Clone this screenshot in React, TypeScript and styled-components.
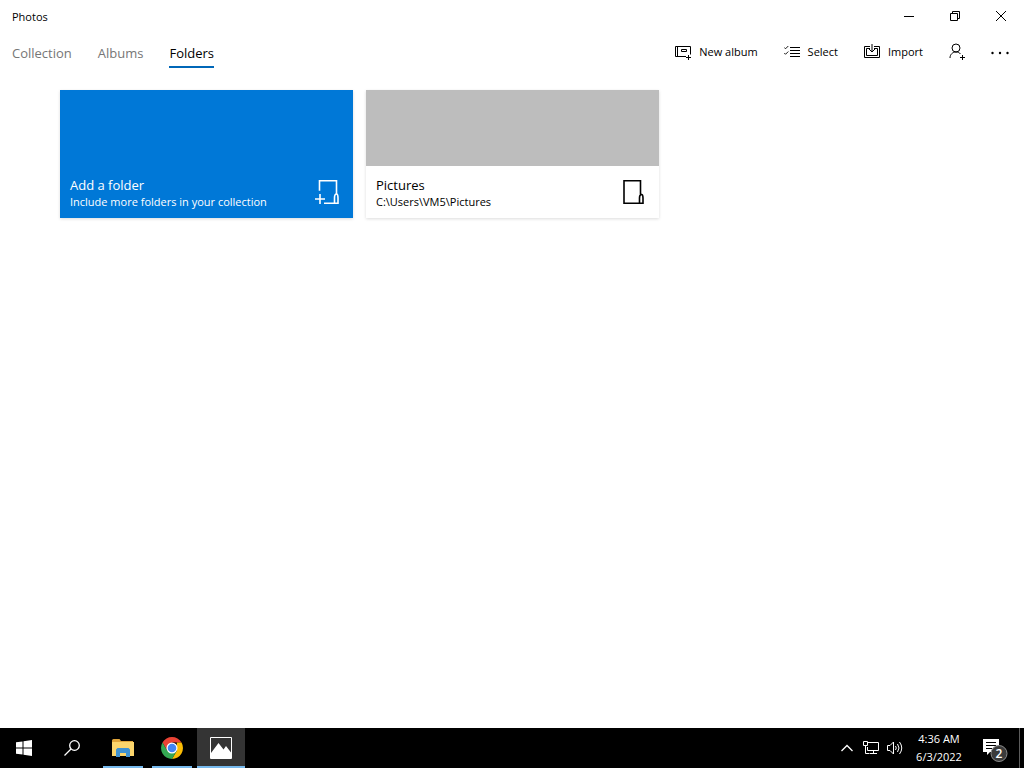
import React from "react";
import styled, { createGlobalStyle } from "styled-components";

const Global = createGlobalStyle`
  *, *::before, *::after { box-sizing: border-box; }
  body { margin: 0; background: #fff; color: #000; font: 12px/16px "Open Sans", "Noto Sans", sans-serif; }
  button { font: inherit; color: inherit; background: none; border: 0; margin: 0; padding: 0; text-align: left; }
  svg { display: block; flex: none; }
  h1, h2, p { margin: 0; font: inherit; }
`;

const Window = styled.div`
  min-height: 100vh;
  display: flex;
  flex-direction: column;
`;

const TitleBar = styled.header`
  display: flex;
  align-items: center;
  height: 32px;
  padding-left: 12px;
`;

const AppName = styled.h1`
  flex: 1;
  padding-top: 2px;
  font-size: 11px;
`;

const CaptionButton = styled.button`
  width: 46px;
  height: 32px;
  display: grid;
  place-items: center;
`;

const Toolbar = styled.div`
  display: flex;
  align-items: center;
  justify-content: space-between;
  height: 40px;
  padding: 0 15px 0 12px;
`;

const Tabs = styled.nav`
  display: flex;
  gap: 26px;
`;

const Tab = styled.a<{ $active?: boolean }>`
  height: 32px;
  padding-top: 7px;
  font-size: 13px;
  line-height: 20px;
  color: ${(p) => (p.$active ? "#000" : "#767676")};
  text-decoration: none;
  border-bottom: 2px solid ${(p) => (p.$active ? "#0067b8" : "transparent")};
`;

const Commands = styled.div`
  display: flex;
  align-items: center;
  gap: 26px;
`;

const Command = styled.button`
  display: flex;
  align-items: center;
  gap: 8px;
  height: 40px;
  font-size: 11px;
`;

const Content = styled.main`
  flex: 1;
  padding: 18px 60px;
`;

const FolderGrid = styled.div`
  display: grid;
  grid-template-columns: repeat(auto-fill, 293px);
  gap: 13px;
`;

const Card = styled.button<{ $accent?: boolean }>`
  display: flex;
  flex-direction: column;
  height: 128px;
  background: ${(p) => (p.$accent ? "#0078d7" : "#fff")};
  color: ${(p) => (p.$accent ? "#fff" : "#000")};
  box-shadow: 0 1px 3px rgba(0, 0, 0, 0.14);
`;

const Thumbnail = styled.div<{ $empty?: boolean }>`
  width: 100%;
  flex: 1;
  background: ${(p) => (p.$empty ? "#bdbdbd" : "transparent")};
`;

const CardInfo = styled.div`
  display: flex;
  align-items: center;
  justify-content: space-between;
  width: 100%;
  height: 52px;
  padding: 0 11px 0 10px;
`;

const CardText = styled.div`
  padding-top: 2px;
`;

const CardTitle = styled.h2`
  font-size: 13px;
  line-height: 18px;
`;

const CardNote = styled.p`
  font-size: 11px;
  line-height: 16px;
`;

const Taskbar = styled.footer`
  display: flex;
  height: 40px;
  background: #000;
  color: #fff;
`;

const TaskButton = styled.button<{ $open?: boolean; $active?: boolean }>`
  width: 48px;
  height: 40px;
  display: grid;
  place-items: center;
  background: ${(p) => (p.$active ? "#343434" : "none")};

  &::after {
    content: "";
    grid-area: 1 / 1;
    align-self: end;
    width: ${(p) => (p.$active ? "48px" : "40px")};
    height: 2px;
    background: ${(p) => (p.$open ? "#76b9ed" : "transparent")};
  }

  svg { grid-area: 1 / 1; }
`;

const Pinned = styled.div`
  display: flex;
  gap: 1px;
  padding-left: 3px;
`;

const Tray = styled.div`
  display: flex;
  align-items: center;
  margin-left: auto;
`;

const TrayButton = styled.button`
  width: 24px;
  height: 40px;
  display: grid;
  place-items: center;
`;

const Clock = styled.button`
  width: 64px;
  font-size: 11px;
  line-height: 18px;
  text-align: center;
`;

const Notifications = styled(TrayButton)`
  width: 48px;
`;

const ShowDesktop = styled.button`
  width: 5px;
  height: 40px;
  border-left: 1px solid #5c5c5c;
`;

const line = { fill: "none", stroke: "currentColor", "aria-hidden": true } as const;

const MinimizeIcon = () => <svg {...line} width="10" height="10"><path d="M0 5.5h10" /></svg>;
const RestoreIcon = () => (
  <svg {...line} width="10" height="10"><path d="M.5 2.500h7v7h-7zM2.500 2.500v-2h7v7h-2" /></svg>
);
const CloseIcon = () => <svg {...line} width="10" height="10"><path d="M0 0l10 10M10 0L0 10" /></svg>;
const AlbumIcon = () => (
  <svg {...line} width="16" height="16">
    <path d="M11 12.500H.5v-10h15v8M2.500 2.500v10M6.500 5.500h5v2h-5zM13.500 11v5M11 13.500h5" />
  </svg>
);
const SelectIcon = () => (
  <svg {...line} width="16" height="16">
    <path d="M6 3.500h10M6 6.500h10M6 9.500h10M6 12.500h10" />
    <path strokeWidth=".9" d="M.3 3.500l1.200 1.300L4.300 2M.3 9l1.200 1.300L4.300 7.500" />
  </svg>
);
const ImportIcon = () => (
  <svg {...line} width="16" height="16">
    <path d="M6 2.500H.5v11h15v-11H10M6 4.500H2.500v7h11v-7H10M8 0v8M5 5l3 3 3-3" />
  </svg>
);
const PersonIcon = () => (
  <svg {...line} width="16" height="18">
    <circle cx="7" cy="5" r="4" />
    <path d="M1 15c0-3.500 2.500-6 6-6 2 0 3.500.7 4.500 2M13.500 12v5M11 14.500h5" />
  </svg>
);
const MoreIcon = () => (
  <svg width="18" height="6" fill="currentColor" aria-hidden>
    <circle cx="1.500" cy="4" r="1.200" /><circle cx="9" cy="4" r="1.200" /><circle cx="16.500" cy="4" r="1.200" />
  </svg>
);
const FolderIcon = () => (
  <svg {...line} width="28" height="26" strokeWidth="1.600">
    <path d="M20.500 15V1.800H4v22.400h16M21.500 15.500c-1.500 0-2 1.500-2 3.500v5.200H23V19c0-2 0-3.500-1.500-3.500z" />
  </svg>
);
const AddFolderIcon = () => (
  <svg {...line} width="28" height="26" strokeWidth="1.600">
    <path d="M22.500 15V1.800h-17v10M22.500 15c-1.500 0-2 2-2 4v5.200H24V19c0-2 0-4-1.500-4zM20.500 24.200H10M6 15v10M1 20h10" />
  </svg>
);
const StartIcon = () => (
  <svg width="16" height="16" fill="currentColor" aria-hidden>
    <path d="M0 2.300L6.500 1.400V7.500H0zM7.500 1.200L16 0v7.500H7.500zM0 8.500h6.500v6.100L0 13.700zM7.500 8.500H16V16l-8.500-1.200z" />
  </svg>
);
const SearchIcon = () => (
  <svg {...line} width="16" height="16" strokeWidth="1.300">
    <circle cx="10.500" cy="5.500" r="4.800" /><path d="M7 9L.5 15.500" />
  </svg>
);
const ExplorerIcon = () => (
  <svg width="22" height="18" aria-hidden>
    <path fill="#e0a53a" d="M0 1.500Q0 0 1.500 0h6l1.500 2h12v5H0z" />
    <path fill="#fbd56c" d="M0 3h22v14H0z" />
    <path fill="#3f92d2" d="M4 10.500L5.500 9h11l1.500 1.500V18h-4v-4H8v4H4z" />
  </svg>
);
const ChromeIcon = () => (
  <svg width="22" height="22" viewBox="0 0 22 22" aria-hidden>
    <path fill="#ea4335" d="M1.500 5.500a11 11 0 0 1 19 0H11L6.200 13.700z" />
    <path fill="#fbbc05" d="M20.500 5.500A11 11 0 0 1 11 22l4.800-8.200V5.500z" />
    <path fill="#34a853" d="M1.500 5.500A11 11 0 0 0 11 22l4.800-8.200H6.200z" />
    <circle cx="11" cy="11" r="5.500" fill="#fff" /><circle cx="11" cy="11" r="4.300" fill="#4285f4" />
  </svg>
);
const PhotosIcon = () => (
  <svg width="22" height="22" aria-hidden>
    <path {...line} d="M.5 .5h21v21H.5z" />
    <path fill="currentColor" d="M1 16L8.500 6l5 6.500L16 9l5 6.500V21H1z" />
  </svg>
);
const ChevronIcon = () => <svg {...line} width="12" height="8" strokeWidth="1.300"><path d="M.5 7L6 1.500 11.500 7" /></svg>;
const NetworkIcon = () => (
  <svg {...line} width="16" height="16">
    <path d="M5 2.500h10.500v8h-11V7M.5 1.500h4v4h-4zM2.500 5.500v8h4M10.500 10.500v3M7 13.500h7" />
  </svg>
);
const SpeakerIcon = () => (
  <svg {...line} width="18" height="16">
    <path d="M1.500 5.500H4L7.500 2v12L4 10.500H1.500zM9.500 6q1.500 2 0 4M11.500 4q3 4 0 8M13.500 2q4.500 6 0 12" />
  </svg>
);
const NotificationIcon = () => (
  <svg width="26" height="28" aria-hidden>
    <path fill="#fff" d="M1 5h16v13H8l-3 3v-3H1z" />
    <path stroke="#000" d="M4 8.500h10M4 11.500h10M4 14.500h6" />
    <circle cx="17" cy="19.500" r="8" fill="#3b3b3b" stroke="#8a8a8a" />
    <text x="17" y="24" fill="#fff" fontSize="12" fontWeight="600" textAnchor="middle">2</text>
  </svg>
);

export default function App() {
  return (
    <Window>
      <Global />
      <TitleBar>
        <AppName>Photos</AppName>
        <CaptionButton aria-label="Minimize"><MinimizeIcon /></CaptionButton>
        <CaptionButton aria-label="Restore"><RestoreIcon /></CaptionButton>
        <CaptionButton aria-label="Close"><CloseIcon /></CaptionButton>
      </TitleBar>
      <Toolbar>
        <Tabs>
          <Tab href="#collection">Collection</Tab>
          <Tab href="#albums">Albums</Tab>
          <Tab href="#folders" $active aria-current="page">Folders</Tab>
        </Tabs>
        <Commands>
          <Command><AlbumIcon />New album</Command>
          <Command><SelectIcon />Select</Command>
          <Command><ImportIcon />Import</Command>
          <Command aria-label="Sign in"><PersonIcon /></Command>
          <Command aria-label="See more"><MoreIcon /></Command>
        </Commands>
      </Toolbar>
      <Content>
        <FolderGrid>
          <Card $accent>
            <Thumbnail />
            <CardInfo>
              <CardText>
                <CardTitle>Add a folder</CardTitle>
                <CardNote>Include more folders in your collection</CardNote>
              </CardText>
              <AddFolderIcon />
            </CardInfo>
          </Card>
          <Card>
            <Thumbnail $empty />
            <CardInfo>
              <CardText>
                <CardTitle>Pictures</CardTitle>
                <CardNote>C:\Users\VM5\Pictures</CardNote>
              </CardText>
              <FolderIcon />
            </CardInfo>
          </Card>
        </FolderGrid>
      </Content>
      <Taskbar>
        <TaskButton aria-label="Start"><StartIcon /></TaskButton>
        <TaskButton aria-label="Search"><SearchIcon /></TaskButton>
        <Pinned>
          <TaskButton $open aria-label="File Explorer"><ExplorerIcon /></TaskButton>
          <TaskButton $open aria-label="Chrome"><ChromeIcon /></TaskButton>
          <TaskButton $open $active aria-label="Photos"><PhotosIcon /></TaskButton>
        </Pinned>
        <Tray>
          <TrayButton aria-label="Show hidden icons"><ChevronIcon /></TrayButton>
          <TrayButton aria-label="Network"><NetworkIcon /></TrayButton>
          <TrayButton aria-label="Volume"><SpeakerIcon /></TrayButton>
          <Clock>4:36 AM<br />6/3/2022</Clock>
          <Notifications aria-label="Notifications"><NotificationIcon /></Notifications>
          <ShowDesktop aria-label="Show desktop" />
        </Tray>
      </Taskbar>
    </Window>
  );
}
